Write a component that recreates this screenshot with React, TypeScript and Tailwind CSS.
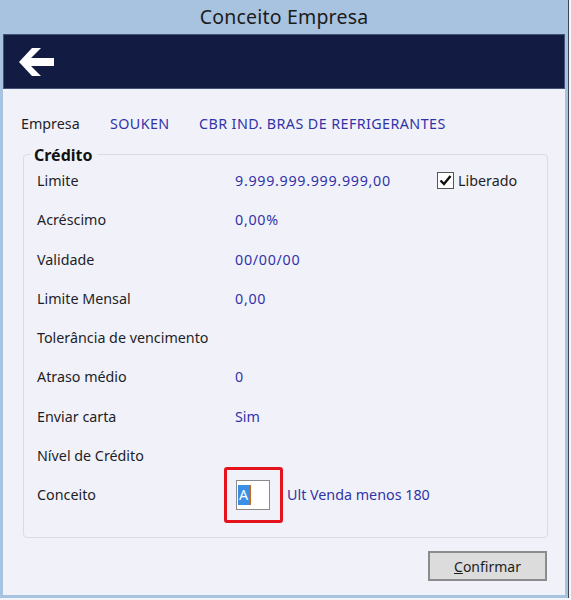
import React from "react";

const rows: { label: string; value?: string; num?: boolean }[] = [
  { label: "Limite", value: "9.999.999.999.999,00", num: true },
  { label: "Acréscimo", value: "0,00%", num: true },
  { label: "Validade", value: "00/00/00", num: true },
  { label: "Limite Mensal", value: "0,00", num: true },
  { label: "Tolerância de vencimento" },
  { label: "Atraso médio", value: "0", num: true },
  { label: "Enviar carta", value: "Sim" },
  { label: "Nível de Crédito" },
];

export default function App() {
  const font = { fontFamily: '"Noto Sans", "Segoe UI", sans-serif' };
  return (
    <div className="w-[571px] h-[600px] bg-[#f3f5fa]" style={font}>
      <div className="w-[569px] h-[598px] bg-[#a8c3df] border-r border-[#3c4452] flex flex-col px-[3px] pb-[3px]">
        <div className="h-[34px] flex items-center justify-center text-[19.5px] tracking-[0.2px] text-[#1b1b1b]">
          Conceito Empresa
        </div>
        <div className="h-[55px] bg-[#121c42] border border-[#44527a] flex items-center pl-[15px]">
          <svg width="36" height="32" viewBox="0 0 36 32">
            <polygon
              points="0,16 13,2 22,2 12,12 35,12 35,20 12,20 22,30 13,30"
              fill="#ffffff"
            />
          </svg>
        </div>
        <div className="flex-1 bg-[#f1f2f9] flex flex-col pl-[20px] pr-[17px] text-[14.3px] text-[#1e1e28]">
          <div className="flex items-center h-[20px] mt-[25px]">
            <span className="w-[89px] -ml-[2px]">Empresa</span>
            <span className="w-[89px] text-[#3232a8] tracking-[0.4px]">SOUKEN</span>
            <span className="text-[#3232a8] tracking-[0.42px]">CBR IND. BRAS DE REFRIGERANTES</span>
          </div>
          <div className="relative mt-[20px] h-[384px] border border-[#d8dce6] rounded-[4px] pl-[13px] pt-[6px]">
            <div className="absolute -top-[12px] left-[6px] px-[4px] bg-[#f1f2f9] font-bold text-[16px] text-[#111]">
              Crédito
            </div>
            {rows.map((r, i) => (
              <div key={i} className="flex items-center h-[39.3px]">
                <span className="w-[198px]">{r.label}</span>
                <span className={r.num ? "w-[202px] text-[#3232a8] tracking-[0.7px]" : "w-[202px] text-[#3232a8]"}>
                  {r.value ?? ""}
                </span>
                {i === 0 && (
                  <span className="flex items-center gap-[4px]">
                    <span className="w-[17px] h-[17px] border border-[#555] bg-white flex items-center justify-center">
                      <svg width="13" height="13" viewBox="0 0 13 13">
                        <path d="M1.5 6.5 L5 10 L11.5 2" stroke="#111" strokeWidth="2.4" fill="none" />
                      </svg>
                    </span>
                    <span>Liberado</span>
                  </span>
                )}
              </div>
            ))}
            <div className="flex items-center h-[39.3px]">
              <span className="w-[187px]">Conceito</span>
              <div className="w-[59px] h-[56px] border-[3px] border-[#e5141c] rounded-[3px] flex items-center pl-[9px]">
                <div className="w-[34px] h-[30px] border border-[#8a8a8a] bg-white flex items-center pl-[1px]">
                  <span className="bg-[#3a8ee6] text-white px-[1px] leading-[20px] border-r-2 border-[#c86a1a]">A</span>
                </div>
              </div>
              <span className="ml-[4px] text-[#3232a8]">Ult Venda menos 180</span>
            </div>
          </div>
          <div className="flex justify-end mt-[13px] pr-[1px]">
            <button className="w-[119px] h-[30px] bg-[#dcdcdc] border-2 border-[#8c8c8c] text-[14px] text-[#1e1e1e]">
              <span className="underline">C</span>onfirmar
            </button>
          </div>
        </div>
      </div>
    </div>
  );
}
